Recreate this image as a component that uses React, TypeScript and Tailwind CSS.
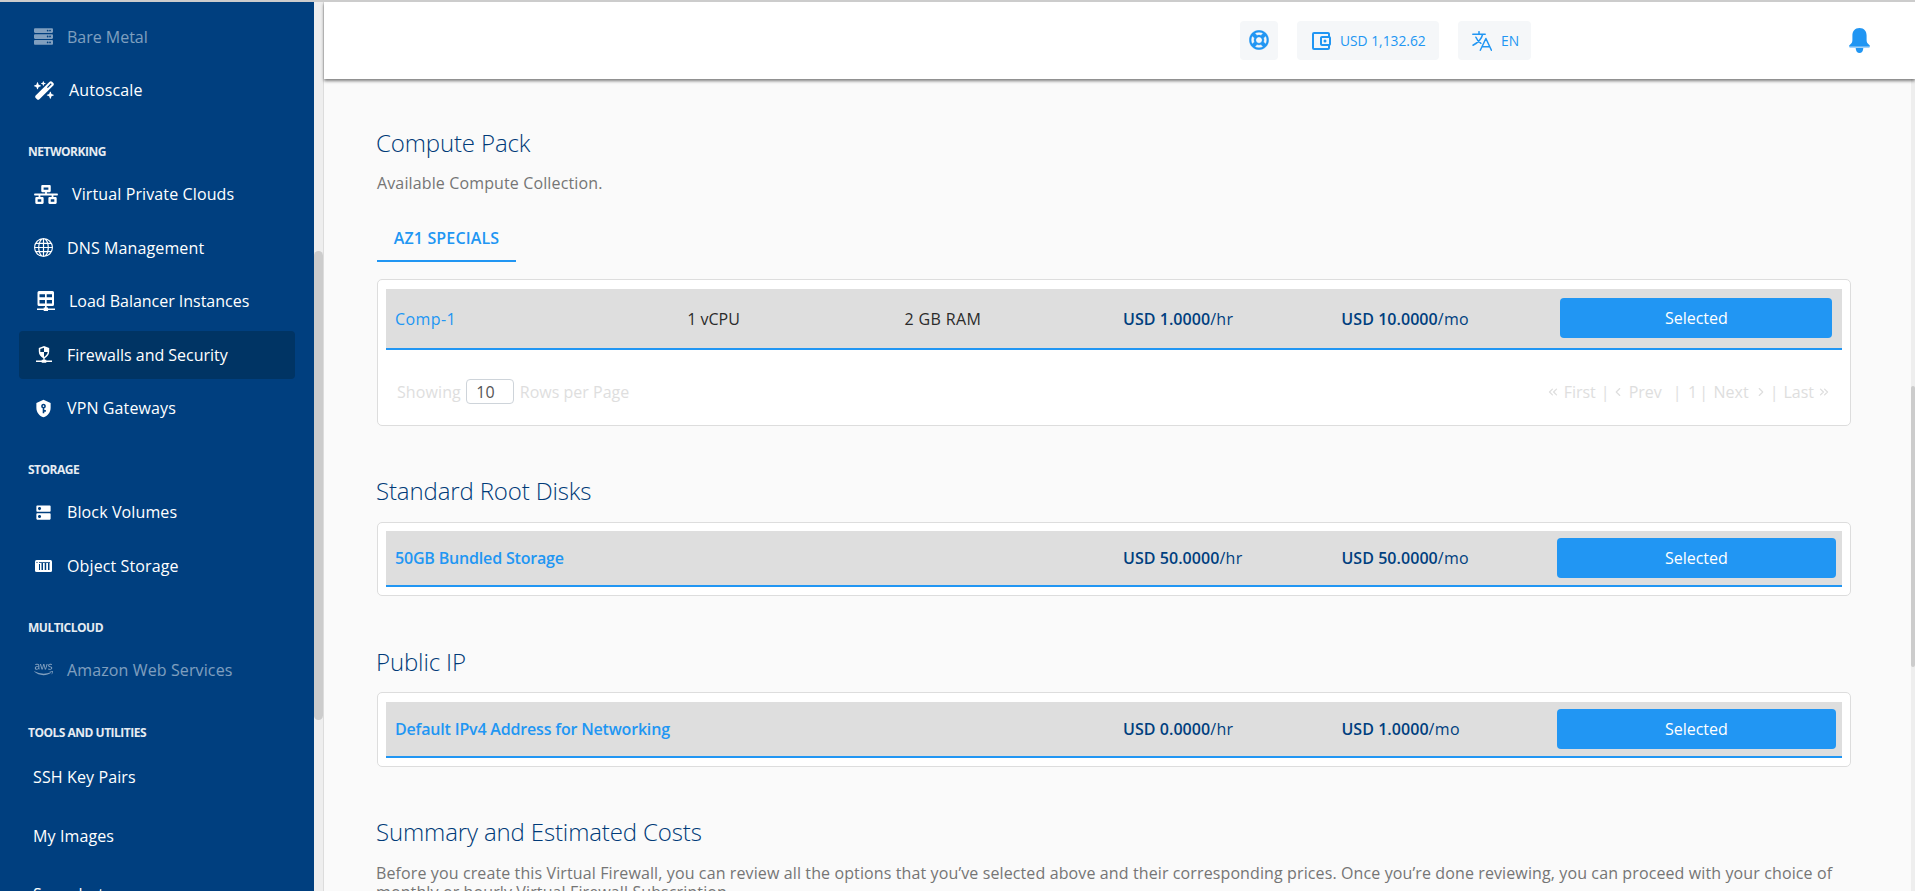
import React from "react";
import { FaServer, FaNetworkWired, FaAws, FaRegLifeRing } from "react-icons/fa";
import { FaWandMagicSparkles } from "react-icons/fa6";
import { BsGlobe } from "react-icons/bs";
import { MdDns, MdOutlineAccountBalanceWallet } from "react-icons/md";
import { ChevronLeft, ChevronRight, ChevronsLeft, ChevronsRight } from "lucide-react";

function LoadBalancerIcon() {
  return (
    <svg viewBox="0 0 18 20" className="h-5 w-[18px]" fill="currentColor">
      <path
        fillRule="evenodd"
        d="M2 0h13.500a1.500 1.500 0 0 1 1.500 1.500v12a1.500 1.500 0 0 1-1.500 1.500H2A1.500 1.500 0 0 1 .5 13.500v-12A1.500 1.500 0 0 1 2 0zM2.500 3.200v3.100H8V3.200zm7.200 0v3.100h5.300V3.200zM2.500 9v3.500H8V9zm7.200 0v3.500h5.300V9z"
      />
      <path d="M8 15h1.700v1.500h1.300v1h7v1.500h-7v1H6.700v-1H0v-1.500h6.700v-1H8z" />
    </svg>
  );
}

function FirewallIcon() {
  return (
    <svg viewBox="0 0 16 17" className="h-[17px] w-4" fill="currentColor">
      <path d="M8 0l5.200 2v3.600c0 3-2 5.500-4.500 6.700v1.500h1.600v.8H16v1.300h-5.700v.9H5.700v-.9H0v-1.300h5.700v-.8h1.600v-1.500C4.800 11.100 2.800 8.600 2.800 5.600V2z" />
      <path d="M8 1.700v4.400H4.300V3.100zM8 6.100h3.700c-.2 2-1.700 3.900-3.700 4.800z" fill="#003464" />
    </svg>
  );
}

function ShieldKeyIcon() {
  return (
    <svg viewBox="0 0 24 24" className="size-[19px]" fill="currentColor">
      <path d="M12 8a1 1 0 1 1 0 2 1 1 0 0 1 0-2m9 3c0 5.550-3.840 10.740-9 12-5.160-1.260-9-6.450-9-12V5l9-4 9 4zm-9-5a3 3 0 0 0-1 5.830V18h2v-2h2v-2h-2v-2.170A3 3 0 0 0 12 6z" />
    </svg>
  );
}

function ObjectStorageIcon() {
  return (
    <svg viewBox="0 0 17 12" className="h-3 w-[17px]">
      <rect width="17" height="12" rx="1.500" fill="currentColor" />
      <g fill="#003f7f">
        <rect x="1.500" y="2" width="1" height="1" />
        <rect x="4" y="2" width="11" height=".8" />
        <rect x="4" y="4" width="1" height="6" />
        <rect x="6.500" y="3" width="1.500" height="7" />
        <rect x="9.700" y="3" width="1.500" height="7" />
        <rect x="13" y="3" width="1.500" height="7" />
      </g>
    </svg>
  );
}

function LanguageIcon() {
  return (
    <svg
      viewBox="0 0 20 20"
      className="size-5"
      fill="none"
      stroke="currentColor"
      strokeWidth="1.500"
      strokeLinecap="round"
      strokeLinejoin="round"
    >
      <path d="M7 .7v2.500M.8 3.200h12.400M10.700 3.300C9.500 8 6 11.800 1 14.200M3.900 6.200c1 2.500 2.700 4.600 5 6.100" />
      <path d="M8.300 19.200l5.600-11.700 5.500 11.700M10 15.700h7.800" />
    </svg>
  );
}

function BellIcon() {
  return (
    <svg viewBox="0 0 21 25" className="h-[25px] w-[21px]" fill="#2196f3">
      <path d="M10.500 0C5.800 0 3.400 3.400 3.400 7.500v4.500c0 2-.6 3-1.700 4C.6 16.900 0 17.500 0 18.500h21c0-1-.6-1.600-1.700-2.500-1.100-1-1.700-2-1.700-4V7.500C17.600 3.400 15.200 0 10.500 0z" />
      <rect y="18.300" x="0.500" width="20" height="1.500" opacity=".5" />
      <path d="M6.700 20h7.600c0 3-1.600 5-3.800 5s-3.800-2-3.800-5z" />
    </svg>
  );
}

type NavItemProps = { icon?: React.ReactNode; label: string; active?: boolean; muted?: boolean; tight?: boolean };

function NavItem({ icon, label, active, muted, tight }: NavItemProps) {
  return (
    <a
      className={`mx-[19px] flex h-12 shrink-0 items-center rounded pl-[15px] text-[16px] ${
        tight ? "tracking-[-0.02px]" : "tracking-[0.12px]"
      } ${active ? "bg-[#003464]" : ""} ${muted ? "text-white/50" : "text-white"}`}
    >
      {icon && <span className="mr-[14px] flex min-w-[19px] justify-center">{icon}</span>}
      <span className={icon ? "" : "-ml-px pb-px"}>{label}</span>
    </a>
  );
}

function NavGroup({ title, children, loose }: { title?: string; children: React.ReactNode; loose?: boolean }) {
  return (
    <section className="shrink-0">
      {title && (
        <h2
          className={`flex h-14 items-end pl-7 text-[12px] font-bold leading-[18px] tracking-[-0.5px] text-[#e6ecf2] ${
            loose ? "pb-2" : "pb-[9px]"
          }`}
        >
          {title}
        </h2>
      )}
      <div className={`flex flex-col ${loose ? "mt-1 gap-[10.600px]" : "gap-[5.500px]"}`}>{children}</div>
    </section>
  );
}

function Sidebar() {
  return (
    <aside className="flex h-full w-[324px] shrink-0 border-r border-[#dcdcdc]">
      <nav className="flex h-full w-[314px] flex-col overflow-hidden bg-[#003f7f] pt-[10.700px]">
        <NavGroup>
          <NavItem icon={<FaServer size={19} />} label="Bare Metal" muted tight />
          <NavItem icon={<FaWandMagicSparkles className="h-[19px] w-[21px]" />} label="Autoscale" />
        </NavGroup>
        <NavGroup title="NETWORKING">
          <NavItem icon={<FaNetworkWired className="h-[19px] w-6" />} label="Virtual Private Clouds" />
          <NavItem icon={<BsGlobe size={19} />} label="DNS Management" />
          <NavItem
            icon={
              <span className="pl-[3px]">
                <LoadBalancerIcon />
              </span>
            }
            label="Load Balancer Instances"
            tight
          />
          <NavItem icon={<FirewallIcon />} label="Firewalls and Security" active tight />
          <NavItem icon={<ShieldKeyIcon />} label="VPN Gateways" />
        </NavGroup>
        <NavGroup title="STORAGE">
          <NavItem icon={<MdDns size={19} />} label="Block Volumes" />
          <NavItem icon={<ObjectStorageIcon />} label="Object Storage" />
        </NavGroup>
        <NavGroup title="MULTICLOUD">
          <NavItem icon={<FaAws size={19} />} label="Amazon Web Services" muted />
        </NavGroup>
        <NavGroup title="TOOLS AND UTILITIES" loose>
          <NavItem label="SSH Key Pairs" />
          <NavItem label="My Images" />
          <NavItem label="Snapshots" />
        </NavGroup>
      </nav>
      <div className="w-[9px] bg-[#eeeeee] pt-[249px]">
        <div className="h-[469px] rounded-full bg-[#cccccc]" />
      </div>
    </aside>
  );
}

function Header() {
  return (
    <header className="z-10 flex h-[77px] shrink-0 items-start bg-white pl-[916px] pt-[19px] text-[13.800px] text-[#2196f3] shadow-[0_2px_3px_rgba(0,0,0,0.5)]">
      <button className="flex h-[39px] w-[38px] items-center justify-center rounded bg-[#f5f7f9] pb-px">
        <FaRegLifeRing size={20} stroke="currentColor" strokeWidth={8} />
      </button>
      <button className="ml-[19px] flex h-[39px] w-[142px] items-center rounded bg-[#f5f7f9] pl-3">
        <MdOutlineAccountBalanceWallet size={24} />
        <span className="ml-[7px] pt-px">USD 1,132.62</span>
      </button>
      <button className="ml-[19px] flex h-[39px] w-[73px] items-center rounded bg-[#f5f7f9] pl-3.5">
        <LanguageIcon />
        <span className="ml-[9px] pt-px">EN</span>
      </button>
      <button className="ml-[318px] mt-[7px]">
        <BellIcon />
      </button>
    </header>
  );
}

function Title({ children }: { children: React.ReactNode }) {
  return <h1 className="-ml-px text-[24px] font-light leading-8 tracking-[-0.13px] text-[#003a78]">{children}</h1>;
}

function Price({ amount, unit }: { amount: string; unit: string }) {
  return (
    <div className="px-[9px] tracking-[0.3px] text-[#003f7f]">
      <span className="font-semibold tracking-[0.05px]">USD {amount}</span>/{unit}
    </div>
  );
}

function SelectedButton() {
  return <button className="mb-px block h-10 w-full rounded bg-[#2196f3] text-white">Selected</button>;
}

function BundleCard({ name, hr, mo, className }: { name: string; hr: string; mo: string; className: string }) {
  return (
    <div className={`rounded-[5px] border border-[#dddddd] bg-white px-2 pb-2 ${className}`}>
      <div className="grid h-14 grid-cols-[50%_15%_15%_20%] items-center border-b-2 border-[#2196f3] bg-[#dedede]">
        <div className="px-[9px] font-semibold tracking-[-0.18px] text-[#2196f3]">{name}</div>
        <Price amount={hr} unit="hr" />
        <Price amount={mo} unit="mo" />
        <div className="px-1.5">
          <SelectedButton />
        </div>
      </div>
    </div>
  );
}

function Pager() {
  return (
    <div className="flex items-center pt-px">
      <ChevronsLeft size={14} strokeWidth={2.2} />
      <span className="ml-1">First</span>
      <span className="ml-[5px]">|</span>
      <ChevronLeft size={14} strokeWidth={2} className="ml-px" />
      <span className="ml-1">Prev</span>
      <span className="ml-[11px]">|</span>
      <span className="ml-[6.500px]">1</span>
      <span className="ml-0.5">|</span>
      <span className="ml-[5.500px]">Next</span>
      <ChevronRight size={14} strokeWidth={2} className="ml-[5px]" />
      <span className="ml-0.5">|</span>
      <span className="ml-[5px]">Last</span>
      <ChevronsRight size={14} strokeWidth={2.2} className="ml-[3px]" />
    </div>
  );
}

export default function App() {
  return (
    <div className="flex h-[891px] w-[1915px] flex-col overflow-hidden border-t-2 border-[#cccccc] bg-[#fafafa] font-['Open_Sans','Noto_Sans',sans-serif] text-[16px] leading-6">
      <div className="flex min-h-0 flex-1">
        <Sidebar />
        <div className="flex min-w-0 flex-1 flex-col">
          <Header />
          <div className="flex min-h-0 flex-1">
            <main className="flex w-[1587px] flex-col overflow-hidden pl-[53px] pr-[60px] pt-12">
              <Title>Compute Pack</Title>
              <p className="mt-3 tracking-[0.13px] text-[#757575]">Available Compute Collection.</p>
              <div className="mt-[31px] flex">
                <div className="h-[36px] w-[139px] border-b-2 border-[#2196f3] text-center font-semibold tracking-[0.15px] text-[#2196f3]">
                  AZ1 SPECIALS
                </div>
              </div>
              <div className="mt-[17px] h-[147px] shrink-0 rounded-[5px] border border-[#dddddd] bg-white px-2 pt-[9px]">
                <div className="grid h-[61px] grid-cols-[20%_15%_15%_15%_15%_20%] items-center border-b-2 border-[#2196f3] bg-[#dedede] text-[#2b2b2b]">
                  <div className="px-[9px] tracking-[0.4px] text-[#2196f3]">Comp-1</div>
                  <div className="px-2.5">1 vCPU</div>
                  <div className="px-[9px] tracking-[0.35px]">2 GB RAM</div>
                  <Price amount="1.0000" unit="hr" />
                  <Price amount="10.0000" unit="mo" />
                  <div className="px-[9.500px]">
                    <SelectedButton />
                  </div>
                </div>
                <div className="mt-7 flex items-center justify-between pl-[11px] pr-[11px] text-[#dedede]">
                  <div className="flex items-center">
                    <span className="pt-px tracking-[0.1px]">Showing</span>
                    <span className="mx-[5.500px] mt-px h-[25px] w-12 rounded border border-[#ced4da] bg-white pl-[9px] leading-[25px] text-[#555555]">
                      10
                    </span>
                    <span className="pt-px">Rows per Page</span>
                  </div>
                  <Pager />
                </div>
              </div>
              <div className="mt-[49px]">
                <Title>Standard Root Disks</Title>
              </div>
              <BundleCard name="50GB Bundled Storage" hr="50.0000" mo="50.0000" className="mt-[15px] pt-2" />
              <div className="mt-[50px]">
                <Title>Public IP</Title>
              </div>
              <BundleCard
                name="Default IPv4 Address for Networking"
                hr="0.0000"
                mo="1.0000"
                className="mt-3.5 pt-[9px]"
              />
              <div className="mt-[49px]">
                <Title>Summary and Estimated Costs</Title>
              </div>
              <p className="-ml-px mt-4 whitespace-nowrap leading-[18.500px] tracking-[0.115px] text-[#757575]">
                Before you create this Virtual Firewall, you can review all the options that you’ve selected above and
                their corresponding prices. Once you’re done reviewing, you can proceed with your choice of
                <br />
                monthly or hourly Virtual Firewall Subscription.
              </p>
            </main>
            <div className="w-1 bg-[#eeeeee] pt-[307px]">
              <div className="h-[281px] rounded-full bg-[#cccccc]" />
            </div>
          </div>
        </div>
      </div>
    </div>
  );
}
